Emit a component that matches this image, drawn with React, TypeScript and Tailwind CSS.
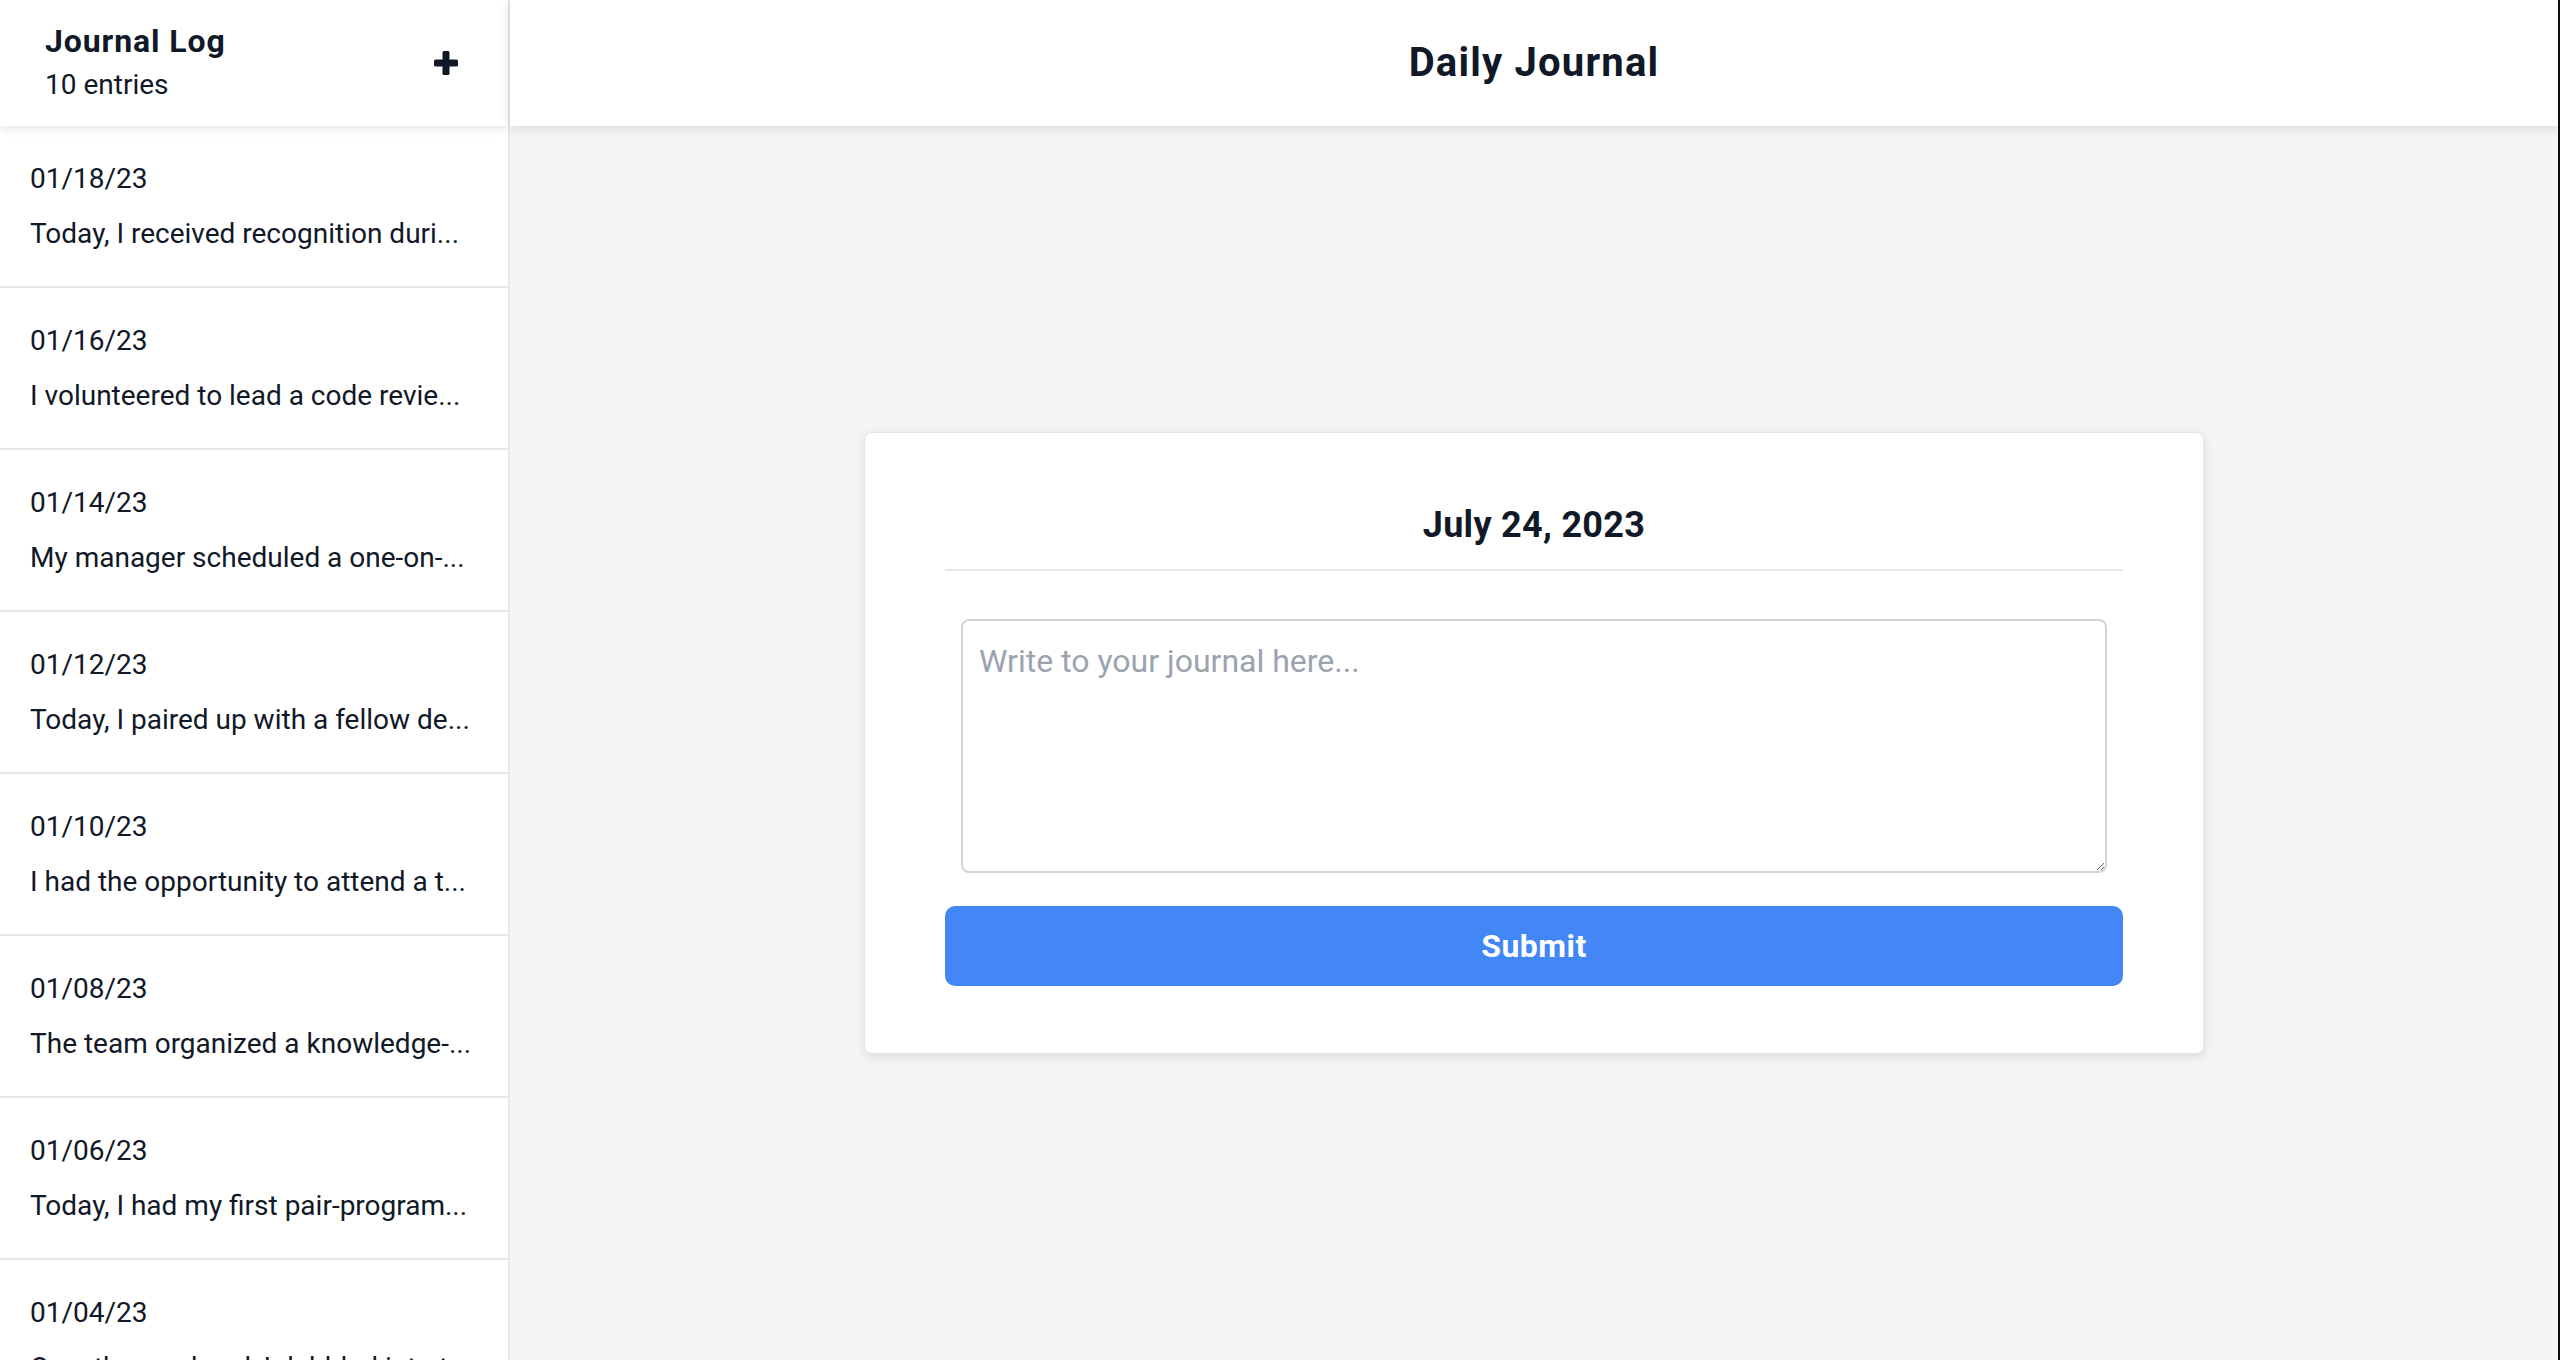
import React from "react";

const entries = [
  { date: "01/18/23", text: "Today, I received recognition duri..." },
  { date: "01/16/23", text: "I volunteered to lead a code revie..." },
  { date: "01/14/23", text: "My manager scheduled a one-on-..." },
  { date: "01/12/23", text: "Today, I paired up with a fellow de..." },
  { date: "01/10/23", text: "I had the opportunity to attend a t..." },
  { date: "01/08/23", text: "The team organized a knowledge-..." },
  { date: "01/06/23", text: "Today, I had my first pair-program..." },
  { date: "01/04/23", text: "Over the weekend, I dabbled into t..." },
  { date: "01/02/23", text: "I started the new year by setting..." },
  { date: "12/31/22", text: "Reflecting on the past year, I re..." },
];

function PlusIcon() {
  return (
    <svg width="24" height="24" viewBox="0 0 24 24" aria-hidden="true">
      <rect x="8.5" y="0" width="7" height="24" rx="1.5" fill="#111827" />
      <rect x="0" y="8.5" width="24" height="7" rx="1.5" fill="#111827" />
    </svg>
  );
}

export default function App() {
  return (
    <div className="flex h-screen w-full overflow-hidden bg-[#f4f4f4] font-[Roboto,sans-serif] text-[#111827] border-r-2 border-[#0c0c14]">
      <aside className="w-[510px] shrink-0 flex flex-col bg-white border-r-2 border-[#e5e7eb] overflow-hidden">
        <div className="relative z-10 h-[126px] shrink-0 flex items-center justify-between pl-[45px] pr-[50px] bg-white shadow-[0_2px_10px_rgba(0,0,0,0.12)]">
          <div className="flex flex-col mb-[4px]">
            <span className="text-[32px] leading-[48px] font-bold tracking-[0.9px]">Journal Log</span>
            <span className="text-[28px] leading-[40px]">10 entries</span>
          </div>
          <PlusIcon />
        </div>
        <div className="flex-1 overflow-hidden">
          {entries.map((e) => (
            <div key={e.date} className="px-[30px] pt-[33px] pb-[32px] border-b-2 border-[#e5e7eb]">
              <div className="text-[28px] leading-[40px]">{e.date}</div>
              <div className="mt-[15px] text-[28px] leading-[40px] whitespace-nowrap overflow-hidden">{e.text}</div>
            </div>
          ))}
        </div>
      </aside>
      <main className="flex-1 flex flex-col min-w-0">
        <header className="relative z-10 h-[126px] shrink-0 flex items-center justify-center bg-white shadow-[0_2px_10px_rgba(0,0,0,0.12)]">
          <h1 className="text-[40px] leading-[56px] font-bold tracking-[1.2px]">Daily Journal</h1>
        </header>
        <div className="flex-1 flex items-center justify-center">
          <div className="w-[1340px] bg-white rounded-[8px] border border-[#e5e7eb] shadow-[0_3px_10px_rgba(0,0,0,0.1)] pt-16 pb-[67px] px-20">
            <h2 className="text-[36px] leading-[56px] font-bold tracking-[0.3px] text-center pb-4 border-b-2 border-[#e5e7eb]">
              July 24, 2023
            </h2>
            <div className="mt-12 mx-4">
              <textarea
                className="block w-full h-[254px] border-2 border-[#d1d5db] rounded-[8px] px-4 py-4 text-[32px] leading-[48px] text-[#111827] placeholder:text-[#9ca3af] outline-none font-[Roboto,sans-serif]"
                placeholder="Write to your journal here..."
              />
            </div>
            <button className="mt-[33px] w-full h-20 rounded-[10px] bg-[#4287f5] text-white text-[32px] font-bold tracking-[0.5px]">
              Submit
            </button>
          </div>
        </div>
      </main>
    </div>
  );
}
